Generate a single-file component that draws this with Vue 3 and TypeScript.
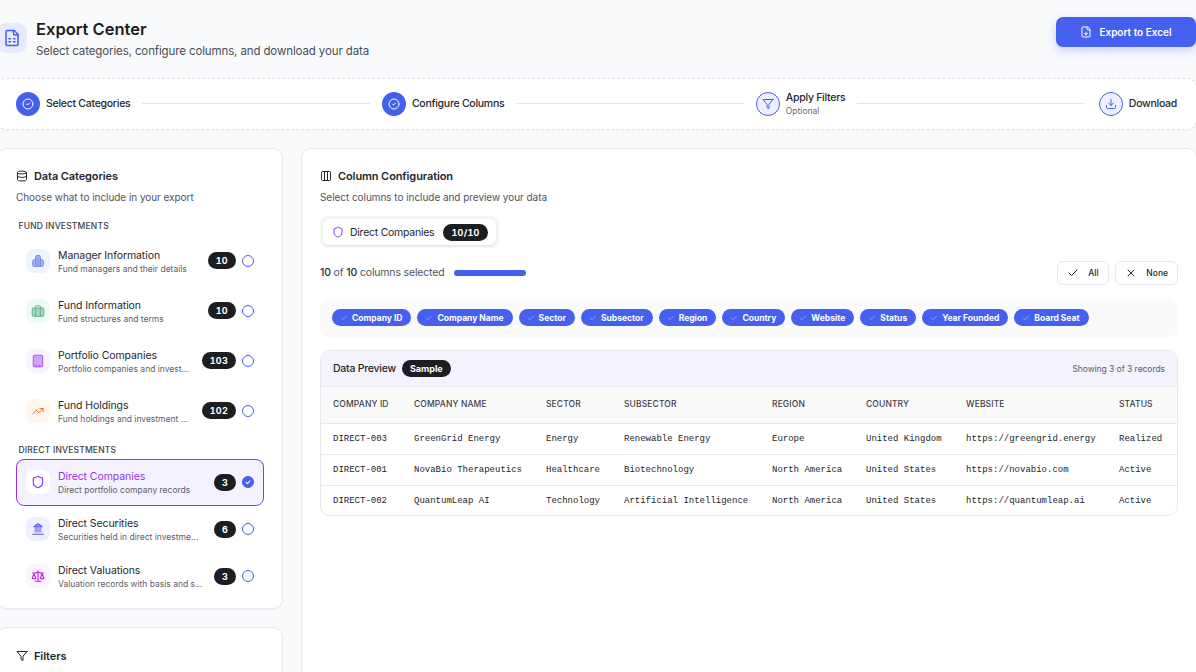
<script setup lang="ts">
interface Cat { name: string; desc: string; count: number; icon: string; tone: string; active?: boolean }
const fundCats: Cat[] = [
  { name: 'Manager Information', desc: 'Fund managers and their details', count: 10, icon: 'building', tone: 'blue' },
  { name: 'Fund Information', desc: 'Fund structures and terms', count: 10, icon: 'briefcase', tone: 'green' },
  { name: 'Portfolio Companies', desc: 'Portfolio companies and investments', count: 103, icon: 'tower', tone: 'violet' },
  { name: 'Fund Holdings', desc: 'Fund holdings and investment positions', count: 102, icon: 'trend', tone: 'orange' },
]
const directCats: Cat[] = [
  { name: 'Direct Companies', desc: 'Direct portfolio company records', count: 3, icon: 'shield', tone: 'white', active: true },
  { name: 'Direct Securities', desc: 'Securities held in direct investments', count: 6, icon: 'landmark', tone: 'indigo' },
  { name: 'Direct Valuations', desc: 'Valuation records with basis and source', count: 3, icon: 'scale', tone: 'pink' },
]
const groups = [
  { label: 'FUND INVESTMENTS', key: 'fund', cats: fundCats },
  { label: 'DIRECT INVESTMENTS', key: 'direct', cats: directCats },
]
const columns = ['Company ID', 'Company Name', 'Sector', 'Subsector', 'Region', 'Country', 'Website', 'Status', 'Year Founded', 'Board Seat']
const heads = ['COMPANY ID', 'COMPANY NAME', 'SECTOR', 'SUBSECTOR', 'REGION', 'COUNTRY', 'WEBSITE', 'STATUS']
const rows = [
  ['DIRECT-003', 'GreenGrid Energy', 'Energy', 'Renewable Energy', 'Europe', 'United Kingdom', 'https://greengrid.energy', 'Realized'],
  ['DIRECT-001', 'NovaBio Therapeutics', 'Healthcare', 'Biotechnology', 'North America', 'United States', 'https://novabio.com', 'Active'],
  ['DIRECT-002', 'QuantumLeap AI', 'Technology', 'Artificial Intelligence', 'North America', 'United States', 'https://quantumleap.ai', 'Active'],
]
</script>

<template>
  <div class="page">
    <header class="top">
      <div class="top-left">
        <div class="logo">
          <svg viewBox="0 0 24 24" class="ic18"><path d="M15 2H6a2 2 0 0 0-2 2v16a2 2 0 0 0 2 2h12a2 2 0 0 0 2-2V7Z" /><path d="M14 2v4a2 2 0 0 0 2 2h4" /><path d="M8 13h2M14 13h2M8 17h2M14 17h2" /></svg>
        </div>
        <div>
          <h1>Export Center</h1>
          <p class="lead">Select categories, configure columns, and download your data</p>
        </div>
      </div>
      <button class="export">
        <svg viewBox="0 0 24 24" class="ic12"><path d="M15 2H6a2 2 0 0 0-2 2v16a2 2 0 0 0 2 2h12a2 2 0 0 0 2-2V7Z" /><path d="M14 2v4a2 2 0 0 0 2 2h4" /><path d="M12 18v-6M9 15l3 3 3-3" /></svg>
        Export to Excel
      </button>
    </header>

    <section class="stepper">
      <div class="step">
        <span class="dot done"><svg viewBox="0 0 24 24" class="ic12"><circle cx="12" cy="12" r="10" /><path d="m9 12 2 2 4-4" /></svg></span>
        <span class="step-name">Select Categories</span>
      </div>
      <i class="line"></i>
      <div class="step">
        <span class="dot done"><svg viewBox="0 0 24 24" class="ic12"><circle cx="12" cy="12" r="10" /><path d="m9 12 2 2 4-4" /></svg></span>
        <span class="step-name">Configure Columns</span>
      </div>
      <i class="line"></i>
      <div class="step">
        <span class="dot todo"><svg viewBox="0 0 24 24" class="ic12"><polygon points="22 3 2 3 10 12.46 10 19 14 21 14 12.46 22 3" /></svg></span>
        <span class="step-stack"><span class="step-name">Apply Filters</span><span class="step-opt">Optional</span></span>
      </div>
      <i class="line"></i>
      <div class="step">
        <span class="dot todo"><svg viewBox="0 0 24 24" class="ic12"><path d="M21 15v4a2 2 0 0 1-2 2H5a2 2 0 0 1-2-2v-4" /><path d="M7 10l5 5 5-5M12 15V3" /></svg></span>
        <span class="step-name">Download</span>
      </div>
    </section>

    <div class="main">
      <aside class="side">
        <section class="card cats">
          <h2><svg viewBox="0 0 24 24" class="ic12"><ellipse cx="12" cy="5" rx="9" ry="3" /><path d="M3 5v14a9 3 0 0 0 18 0V5" /><path d="M3 12a9 3 0 0 0 18 0" /></svg>Data Categories</h2>
          <p class="hint">Choose what to include in your export</p>
          <div v-for="g in groups" :key="g.key" class="group" :class="g.key">
            <div class="group-label">{{ g.label }}</div>
            <div class="items">
              <div v-for="c in g.cats" :key="c.name" class="item" :class="{ active: c.active }">
                <span class="tile" :class="c.tone">
                  <svg v-if="c.icon === 'building'" viewBox="0 0 24 24" class="ic14 duo"><path d="M8 21V6a4 4 0 0 1 8 0v15Z" /><path d="M8 10H6a3 3 0 0 0-3 3v6a2 2 0 0 0 2 2h3ZM16 10h2a3 3 0 0 1 3 3v6a2 2 0 0 1-2 2h-3Z" /><path d="M12 6v15" /></svg>
                  <svg v-else-if="c.icon === 'briefcase'" viewBox="0 0 24 24" class="ic14 duo"><path d="M8 7V5a2 2 0 0 1 2-2h4a2 2 0 0 1 2 2v2" class="nofill" /><rect x="2" y="7" width="20" height="14" rx="3" /><path d="M8 7v14M16 7v14" /></svg>
                  <svg v-else-if="c.icon === 'tower'" viewBox="0 0 24 24" class="ic14 duo"><rect x="4" y="2" width="16" height="20" rx="3" /><path d="M9 22v-3M15 22v-3" /></svg>
                  <svg v-else-if="c.icon === 'trend'" viewBox="0 0 24 24" class="ic12"><path d="M22 7l-8.5 8.5-5-5L2 17" /><path d="M16 7h6v6" /></svg>
                  <svg v-else-if="c.icon === 'shield'" viewBox="0 0 24 24" class="ic14"><path d="M20 13c0 5-3.5 7.5-7.66 8.95a1 1 0 0 1-.67-.01C7.5 20.5 4 18 4 13V6a1 1 0 0 1 1-1c2 0 4.5-1.2 6.24-2.72a1.17 1.17 0 0 1 1.52 0C14.51 3.81 17 5 19 5a1 1 0 0 1 1 1z" /></svg>
                  <svg v-else-if="c.icon === 'landmark'" viewBox="0 0 24 24" class="ic14 duo"><polygon points="12 3 19 8 5 8" /><rect x="6" y="9" width="12" height="9" class="light" /><path d="M3 21h18" /></svg>
                  <svg v-else viewBox="0 0 24 24" class="ic14"><path d="m16 16 3-8 3 8c-.87.65-1.92 1-3 1s-2.13-.35-3-1Z" /><path d="m2 16 3-8 3 8c-.87.65-1.92 1-3 1s-2.13-.35-3-1Z" /><path d="M7 21h10M12 3v18M3 7h2c2 0 5-1 7-2 2 1 5 2 7 2h2" /></svg>
                </span>
                <span class="item-text">
                  <span class="item-name">{{ c.name }}</span>
                  <span class="item-desc">{{ c.desc }}</span>
                </span>
                <span class="pill">{{ c.count }}</span>
                <span class="radio" :class="{ on: c.active }">
                  <svg v-if="c.active" viewBox="0 0 24 24"><path d="m7 12.5 3.5 3.5L17 9" /></svg>
                </span>
              </div>
            </div>
          </div>
        </section>
        <section class="card filters">
          <h2><svg viewBox="0 0 24 24" class="ic12"><polygon points="22 3 2 3 10 12.46 10 19 14 21 14 12.46 22 3" /></svg>Filters</h2>
        </section>
      </aside>

      <section class="card config">
        <h2><svg viewBox="0 0 24 24" class="ic12"><rect x="3" y="3" width="18" height="18" rx="2" /><path d="M9 3v18M15 3v18" /></svg>Column Configuration</h2>
        <p class="hint">Select columns to include and preview your data</p>
        <div class="tabs">
          <div class="tab">
            <svg viewBox="0 0 24 24" class="ic12 purple"><path d="M20 13c0 5-3.5 7.5-7.66 8.95a1 1 0 0 1-.67-.01C7.5 20.5 4 18 4 13V6a1 1 0 0 1 1-1c2 0 4.5-1.2 6.24-2.72a1.17 1.17 0 0 1 1.52 0C14.51 3.81 17 5 19 5a1 1 0 0 1 1 1z" /></svg>
            <span class="tab-name">Direct Companies</span>
            <span class="pill">10/10</span>
          </div>
        </div>
        <div class="selection">
          <span class="sel-text"><b>10</b> of <b>10</b> columns selected</span>
          <span class="bar"></span>
          <span class="grow"></span>
          <button class="mini"><svg viewBox="0 0 24 24" class="ic12"><path d="M20 6 9 17l-5-5" /></svg>All</button>
          <button class="mini"><svg viewBox="0 0 24 24" class="ic12"><path d="M18 6 6 18M6 6l12 12" /></svg>None</button>
        </div>
        <div class="chips">
          <span v-for="c in columns" :key="c" class="chip"><svg viewBox="0 0 24 24"><path d="M20 6 9 17l-5-5" /></svg>{{ c }}</span>
        </div>
        <div class="preview">
          <div class="preview-head">
            <span class="preview-title">Data Preview</span>
            <span class="pill plain">Sample</span>
            <span class="grow"></span>
            <span class="records">Showing 3 of 3 records</span>
          </div>
          <table>
            <thead>
              <tr><th v-for="h in heads" :key="h">{{ h }}</th></tr>
            </thead>
            <tbody>
              <tr v-for="r in rows" :key="r[0]"><td v-for="v in r" :key="v">{{ v }}</td></tr>
            </tbody>
          </table>
        </div>
      </section>
    </div>
  </div>
</template>

<style>
html, body { margin: 0; background: #f9fafc; overflow: hidden; }
</style>

<style scoped>
.page { width: 1200px; height: 672px; margin-left: -3px; font-family: Inter, "Liberation Sans", sans-serif; color: #1f2228; overflow: hidden; box-sizing: border-box; padding-top: 17px; }
svg { fill: none; stroke: currentColor; stroke-width: 2; stroke-linecap: round; stroke-linejoin: round; flex: none; display: block; }
.ic18 { width: 18px; height: 18px; }
.ic14 { width: 14px; height: 14px; }
.ic12 { width: 12px; height: 12px; }
.top { display: flex; justify-content: space-between; align-items: flex-start; height: 61px; padding-right: 1px; }
.top-left { display: flex; gap: 9px; }
.logo { width: 30px; height: 30px; margin-top: 6px; border-radius: 9px; background: #e7eafc; color: #4361ee; display: flex; align-items: center; justify-content: center; }
h1 { margin: 1px 0 0; font-size: 16.5px; line-height: 22px; font-weight: 600; color: #1c1e24; }
.lead { margin: 3px 0 0; font-size: 11.5px; line-height: 16px; letter-spacing: -.12px; color: #494d56; }
.export { width: 140px; height: 30px; border: 0; border-radius: 7px; background: #4560ee; color: #fff; font: 600 10px Inter, sans-serif; display: flex; align-items: center; justify-content: center; gap: 7px; box-shadow: 0 4px 10px rgba(67, 97, 238, .25); }
.stepper { height: 52px; box-sizing: border-box; background: #fff; border: 1px dashed #dfe2e8; border-radius: 10px; display: flex; align-items: center; padding-left: 18px; padding-right: 19px; box-shadow: 0 1px 2px rgba(20, 25, 40, .04); }
.step { display: flex; align-items: center; gap: 6px; flex: none; }
.step:last-child { margin-left: 2px; }
.dot { width: 24px; height: 24px; border-radius: 50%; display: flex; align-items: center; justify-content: center; box-sizing: border-box; }
.dot.done { background: #4560ee; color: #fff; }
.dot.todo { border: 1px solid #4560ee; background: #eef0fd; color: #4560ee; }
.step-name { font-size: 10.5px; color: #24272d; font-weight: 500; line-height: 14px; letter-spacing: -.27px; }
.step-stack { display: flex; flex-direction: column; }
.step-opt { font-size: 8.5px; line-height: 13px; color: #666b74; }
.line { flex: 1; height: 1px; background: #e4e6ea; margin: 0 12px 1px; }
.main { display: flex; gap: 18px; margin-top: 18px; align-items: flex-start; }
.side { width: 286px; flex: none; display: flex; flex-direction: column; gap: 18px; }
.card { background: #fff; border: 1px solid #e6e8ed; border-radius: 10px; box-sizing: border-box; box-shadow: 0 1px 2px rgba(20, 25, 40, .04); }
h2 { margin: 0; display: flex; align-items: center; gap: 6px; font-size: 11px; line-height: 14px; font-weight: 600; letter-spacing: -.1px; color: #23262c; }
.hint { margin: 7px 0 0; font-size: 10px; line-height: 14px; letter-spacing: -.05px; color: #50545d; }
.cats { height: 461px; padding: 20px 18px 0; }
.filters { height: 60px; padding: 21px 18px; }
.group-label { font-size: 8.5px; line-height: 14px; font-weight: 500; letter-spacing: .18px; color: #3d4149; padding-left: 2.5px; }
.group.fund { margin-top: 15px; }
.group.fund .items { margin-top: 4px; gap: 3px; }
.group.direct { margin-top: 9px; }
.group.direct .items { margin-top: 1.5px; gap: 0; }
.items { display: flex; flex-direction: column; width: 248px; }
.item { height: 47px; box-sizing: border-box; border: 1px solid transparent; border-radius: 8px; display: flex; align-items: center; padding: 0 9px; gap: 8px; }
.item.active { background: #f4f2fe; border-color: #9333ea; }
.item.active .item-name { color: #9333ea; }
.tile { width: 24px; height: 24px; border-radius: 8px; display: flex; align-items: center; justify-content: center; flex: none; }
.tile.blue { background: #edf3ff; color: #6f89f0; }
.tile.green { background: #ecfcf4; color: #5fb48e; }
.tile.violet { background: #f9f3ff; color: #a855f7; }
.tile.orange { background: #fff6ec; color: #ea6c25; }
.tile.white { background: #fff; color: #9333ea; }
.tile.indigo { background: #eef0ff; color: #5b4fe0; }
.tile.pink { background: #fcf3ff; color: #c026d3; }
.duo > * { fill: currentColor; fill-opacity: .5; stroke-width: 1.8; }
.duo > .nofill { fill: none; }
.duo > .light { stroke: none; fill-opacity: .5; }
.item-text { flex: 1; min-width: 0; display: flex; flex-direction: column; padding-top: 3px; margin-right: 3px; }
.item-name { font-size: 10.5px; line-height: 14px; letter-spacing: -.08px; color: #24272d; white-space: nowrap; }
.item-desc { font-size: 8.5px; line-height: 13px; color: #5c606a; white-space: nowrap; overflow: hidden; text-overflow: ellipsis; }
.pill { background: #1c1e22; color: #fff; font-size: 9px; font-weight: 700; font-variant-numeric: tabular-nums; letter-spacing: .3px; height: 17px; line-height: 17px; padding: 0 8px; border-radius: 9px; flex: none; }
.pill.plain { letter-spacing: 0; }
.radio { width: 12px; height: 12px; box-sizing: border-box; border: 1px solid #4560ee; border-radius: 50%; flex: none; margin-left: -2px; display: flex; align-items: center; justify-content: center; }
.radio.on { background: #4560ee; color: #fff; }
.radio svg { width: 10px; height: 10px; stroke-width: 2.5; }
.config { flex: 1; height: 540px; padding: 20px 18px; min-width: 0; }
.tabs { margin-top: 12px; width: 179px; height: 32px; box-sizing: border-box; padding: 3px; background: #f5f6f8; border-radius: 8px; }
.tab { height: 26px; background: #fff; border-radius: 6px; display: flex; align-items: center; padding-left: 9px; gap: 6px; box-shadow: 0 1px 2px rgba(20, 25, 40, .1); width: 173px; box-sizing: border-box; }
.tab-name { font-size: 10.5px; letter-spacing: -.25px; color: #24272d; white-space: nowrap; flex: none; }
.tab .pill { margin-left: 3px; }
.purple { color: #9333ea; }
.selection { display: flex; align-items: center; margin-top: 13px; height: 24px; gap: 6px; }
.sel-text { font-size: 10.5px; letter-spacing: -.16px; color: #50545d; margin-bottom: 2px; }
.sel-text b { color: #24272d; font-weight: 500; }
.bar { width: 72px; height: 6px; border-radius: 3px; background: #4560ee; margin-left: 3px; margin-bottom: 1px; }
.grow { flex: 1; }
.mini { height: 24px; display: flex; align-items: center; gap: 9px; padding: 0 9px; min-width: 52px; background: #fff; border: 1px solid #e6e8ed; border-radius: 6px; font: 500 8.5px Inter, sans-serif; color: #24272d; }
.chips { margin-top: 12px; height: 41px; box-sizing: border-box; padding: 12px; background: #fafafa; border-radius: 10px; display: flex; gap: 6px; }
.chip { height: 17px; border-radius: 9px; background: #4560ee; color: #fff; font-size: 8.5px; font-weight: 700; display: flex; align-items: center; gap: 4px; padding: 0 9px 0 8px; white-space: nowrap; }
.chip svg { width: 8px; height: 8px; stroke-width: 1.5; opacity: .8; }
.preview { margin-top: 12px; border: 1px solid #e6e8ed; border-radius: 10px; overflow: hidden; }
.preview-head { height: 36px; background: #f3f2fd; border-bottom: 1px solid #e6e8ed; display: flex; align-items: center; padding: 0 12px; gap: 6px; box-sizing: border-box; }
.preview-title { font-size: 10.5px; color: #24272d; font-weight: 500; letter-spacing: -.25px; }
.records { font-size: 8.5px; color: #5c606a; letter-spacing: -.05px; }
table { width: 100%; border-collapse: collapse; table-layout: fixed; }
th { height: 36px; box-sizing: border-box; background: #fafafa; border-bottom: 1px solid #e6e8ed; text-align: left; padding: 0 0 2px 12px; font-size: 8.5px; font-weight: 500; letter-spacing: .12px; color: #3d4149; white-space: nowrap; }
td { height: 31px; box-sizing: border-box; border-bottom: 1px solid #e9ebef; padding: 0 0 0 12px; font: 9px "Liberation Mono", monospace; color: #22252b; white-space: nowrap; }
tbody tr:last-child td { border-bottom: 0; height: 30px; padding-top: 1px; }
th:nth-child(1) { width: 81px; }
th:nth-child(2) { width: 132px; }
th:nth-child(3) { width: 78px; }
th:nth-child(4) { width: 148px; }
th:nth-child(5) { width: 94px; }
th:nth-child(6) { width: 100px; }
th:nth-child(7) { width: 153px; }
</style>
